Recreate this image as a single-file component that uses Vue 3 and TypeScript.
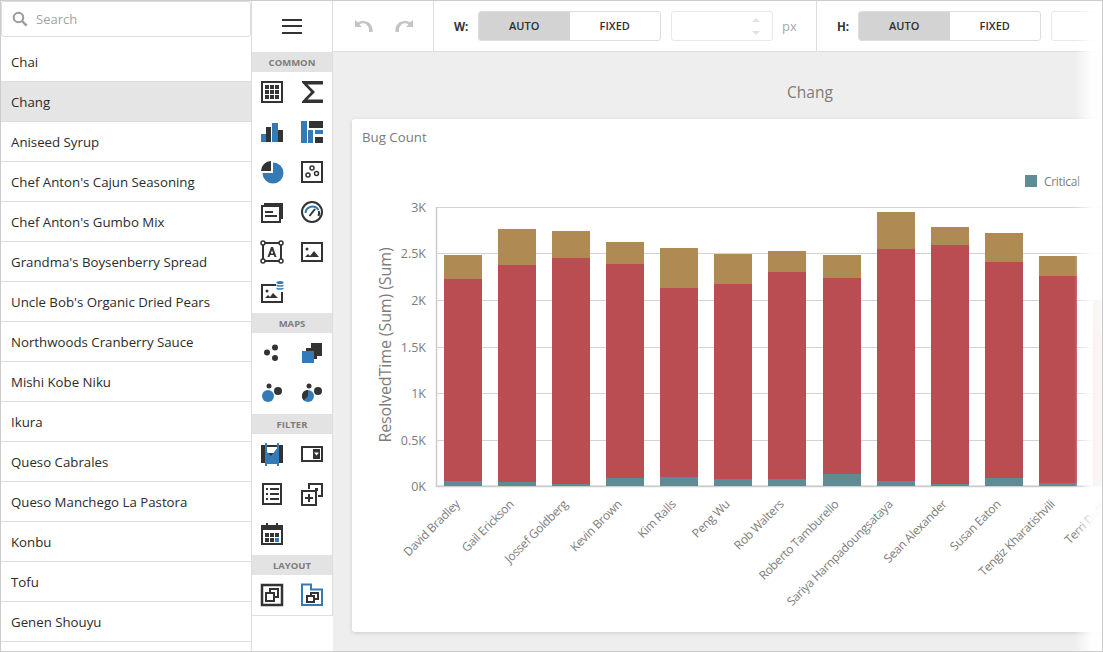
<script setup lang="ts">
const products: string[] = ['Chai','Chang','Aniseed Syrup',"Chef Anton's Cajun Seasoning","Chef Anton's Gumbo Mix","Grandma's Boysenberry Spread","Uncle Bob's Organic Dried Pears",'Northwoods Cranberry Sauce','Mishi Kobe Niku','Ikura','Queso Cabrales','Queso Manchego La Pastora','Konbu','Tofu','Genen Shouyu']
const ticks = [['3K',207.5],['2.5K',253.5],['2K',300.5],['1.5K',347.5],['1K',393.5],['0.5K',440.5],['0K',486]] as [string, number][]
const barData = [
  ['David Bradley',444,481,279,255],['Gail Erickson',498,482,265,229],['Jossef Goldberg',552,484,258,231],
  ['Kevin Brown',606,478,264,242],['Kim Ralls',660,477,288,248],['Peng Wu',714,479,284,254],
  ['Rob Walters',768,479,272,251],['Roberto Tamburello',823,474,278,255],['Sariya Harnpadoungsataya',877,481,249,212],
  ['Sean Alexander',931,484,245,227],['Susan Eaton',985,478,262,233],['Tengiz Kharatishvili',1039,483,276,256],
  ['Terri Duffy',1093,480,330,300]
] as [string, number, number, number, number][]
</script>

<template>
  <div class="frame">
    <aside class="list-panel">
      <div class="search">
        <svg width="16" height="16" viewBox="0 0 16 16"><circle cx="6.5" cy="6.5" r="4.8" fill="none" stroke="#a09a94" stroke-width="2"/><path d="M10 10l4.6 4.6" stroke="#a09a94" stroke-width="2.4"/></svg>
        <span>Search</span>
      </div>
      <ul class="products">
        <li v-for="p in products" :key="p" :class="{ selected: p === 'Chang' }">{{ p }}</li>
      </ul>
    </aside>

    <nav class="toolbox">
      <div class="burger"><i></i><i></i><i></i></div>
      <h4>COMMON</h4>
      <div class="icons">
        <svg viewBox="0 0 24 24"><rect x="2" y="2" width="20" height="20" fill="none" stroke="#333" stroke-width="2"/><path fill="#333" d="M5 5h4v4H5zM10 5h4v4h-4zM15 5h4v4h-4zM5 10h4v4H5zM10 10h4v4h-4zM15 10h4v4h-4zM5 15h4v4H5zM10 15h4v4h-4zM15 15h4v4h-4z"/></svg>
        <svg viewBox="0 0 24 24"><path fill="#333" d="M2 1h21v3.500H7.500L15 12l-7.500 7.500H23V23H2v-1.500L11 12 2 2.500z"/></svg>
        <svg viewBox="0 0 24 24"><path fill="#337ab7" d="M1 14h5v8H1zM12 3h6v19h-6z"/><path fill="#333" d="M6 7h5v15H6zM18 10h5v12h-5z"/></svg>
        <svg viewBox="0 0 24 24"><path fill="#337ab7" d="M1 1h6v22H1zM8 10h5v13H8zM15 10h8v4h-8z"/><path fill="#333" d="M9 1h14v7H9zM15 17h8v6h-8z"/></svg>
        <svg viewBox="0 0 24 24"><path fill="#333" d="M11 1v10H1A10 10 0 0 1 11 1z"/><path fill="#337ab7" d="M13 2.500a10.500 10.500 0 1 1-10.500 10.500h10.500z"/></svg>
        <svg viewBox="0 0 24 24"><rect x="2" y="2" width="20" height="20" fill="none" stroke="#333" stroke-width="2"/><g fill="none" stroke="#333" stroke-width="1.500"><circle cx="12" cy="8" r="2"/><circle cx="8" cy="15" r="2"/><circle cx="16.500" cy="13.500" r="2"/></g></svg>
        <svg viewBox="0 0 24 24"><path fill="#333" d="M4 3h19v16h-2V5H4z"/><rect x="2" y="6" width="18" height="16" fill="#fff" stroke="#333" stroke-width="2"/><path fill="#333" d="M5 11h8v2H5zM5 15h12v2H5z"/></svg>
        <svg viewBox="0 0 24 24"><circle cx="12" cy="12" r="10" fill="none" stroke="#333" stroke-width="2"/><path d="M5.500 13a7 7 0 0 1 13 -3" fill="none" stroke="#337ab7" stroke-width="2"/><path d="M9.500 16L15 9" stroke="#333" stroke-width="2"/><path d="M18.800 11a7 7 0 0 1 -.3 5" fill="none" stroke="#333" stroke-width="2"/></svg>
        <svg viewBox="0 0 24 24"><rect x="3" y="3" width="18" height="18" fill="none" stroke="#333" stroke-width="2"/><g fill="#fff" stroke="#333" stroke-width="1.500"><circle cx="3" cy="3" r="2"/><circle cx="21" cy="3" r="2"/><circle cx="3" cy="21" r="2"/><circle cx="21" cy="21" r="2"/></g><path fill="#333" d="M11 7h2l3.500 10h-2l-.7-2h-3.600l-.7 2h-2zM12 10l-1.200 3.400h2.400z"/></svg>
        <svg viewBox="0 0 24 24"><rect x="2" y="3" width="20" height="18" fill="none" stroke="#333" stroke-width="2"/><circle cx="7" cy="9" r="1.500" fill="#333"/><path fill="#333" d="M5 17l3-3 2 2 4-5 5 6z"/></svg>
        <svg viewBox="0 0 24 24"><path fill="none" stroke="#333" stroke-width="2" d="M16 5H2v17h20v-10"/><circle cx="7" cy="11" r="1.500" fill="#333"/><path fill="#333" d="M5 18l3-3 2 2 3-4 5 5z"/><g fill="#337ab7"><ellipse cx="20" cy="2.500" rx="3.500" ry="1.500"/><path d="M16.500 4.500c1 1 6 1 7 0V6c-1 1-6 1-7 0zM16.500 7.500c1 1 6 1 7 0V9c-1 1-6 1-7 0z"/></g></svg>
      </div>
      <h4>MAPS</h4>
      <div class="icons">
        <svg viewBox="0 0 24 24"><g fill="#333"><circle cx="7" cy="11.500" r="3"/><circle cx="15" cy="6.500" r="3"/><circle cx="15" cy="17" r="3"/></g></svg>
        <svg viewBox="0 0 24 24"><path fill="#333" d="M6 7h5V2h11v13h-5v3H6z"/><path fill="#337ab7" d="M2 10h12v12H2z"/></svg>
        <svg viewBox="0 0 24 24"><circle cx="9" cy="5" r="2.500" fill="#333"/><circle cx="18" cy="10" r="4" fill="#333"/><circle cx="8" cy="15" r="6" fill="#337ab7"/></svg>
        <svg viewBox="0 0 24 24"><circle cx="9" cy="5" r="2.500" fill="#333"/><circle cx="18" cy="10" r="4" fill="#333"/><circle cx="8" cy="15" r="6" fill="#337ab7"/><path fill="#333" d="M8 15V9A6 6 0 0 0 3.800 19.300z"/></svg>
      </div>
      <h4>FILTER</h4>
      <div class="icons">
        <svg viewBox="0 0 24 24"><path fill="#333" d="M1 3h22v18H1z"/><path fill="#fff" d="M6 5h12v6H6z"/><path fill="#337ab7" d="M5 8l6 6 7-9v17H5z"/><path fill="#337ab7" d="M5 1h2v24H5zM17 1h2v24h-2z"/></svg>
        <svg viewBox="0 0 24 24"><rect x="2" y="5" width="20" height="14" fill="none" stroke="#333" stroke-width="2"/><rect x="13" y="7" width="7" height="10" fill="#333"/><path fill="#fff" d="M14 10.500h5l-2.500 3z"/></svg>
        <svg viewBox="0 0 24 24"><rect x="3" y="2" width="18" height="20" fill="none" stroke="#333" stroke-width="2"/><path fill="#333" d="M6 6h2v2H6zM10 6h9v2h-9zM6 11h2v2H6zM10 11h9v2h-9zM6 16h2v2H6zM10 16h9v2h-9z"/></svg>
        <svg viewBox="0 0 24 24"><path fill="none" stroke="#333" stroke-width="2" d="M9 7V2h13v12h-4"/><path fill="#333" d="M15 6h3v3h-3z"/><rect x="2" y="9" width="14" height="14" fill="#fff" stroke="#333" stroke-width="2"/><path fill="#333" d="M8 12h2v3h3v2h-3v3H8v-3H5v-2h3z"/></svg>
        <svg viewBox="0 0 24 24"><rect x="2" y="4" width="20" height="18" fill="none" stroke="#333" stroke-width="2"/><path fill="#333" d="M2 4h20v4H2zM6 1h2v4H6zM16 1h2v4h-2zM5 11h4v4H5zM10 11h4v4h-4zM5 16h4v4H5zM10 16h4v4h-4zM15 11h4v4h-4z"/><path fill="#337ab7" d="M15 16h4v4h-4z"/></svg>
      </div>
      <h4>LAYOUT</h4>
      <div class="icons">
        <svg viewBox="0 0 24 24"><rect x="2" y="2" width="20" height="20" fill="none" stroke="#333" stroke-width="2.500"/><rect x="10" y="6" width="8" height="8" fill="none" stroke="#333" stroke-width="2"/><rect x="6" y="10" width="8" height="8" fill="#fff" stroke="#333" stroke-width="2"/></svg>
        <svg viewBox="0 0 24 24"><path fill="none" stroke="#337ab7" stroke-width="2" d="M2 22V1.500h9v5h11V22z"/><rect x="11" y="10" width="7" height="6" fill="none" stroke="#333" stroke-width="2"/><rect x="7" y="13" width="7" height="6" fill="#fff" stroke="#333" stroke-width="2"/></svg>
      </div>
    </nav>

    <main class="workspace">
      <header class="toolbar">
        <div class="history">
          <svg width="20" height="16" viewBox="0 0 20 16"><path fill="#c4c4c4" d="M1 2v7h7L5.500 6.500C9 4 14 5.500 15 11v3h3.500v-3C18 5 11 .5 4 4.500z"/></svg>
          <svg width="20" height="16" viewBox="0 0 20 16"><path fill="#c4c4c4" d="M19 2v7h-7l2.500-2.500C11 4 6 5.500 5 11v3H1.500v-3C2 5 9 .5 16 4.500z"/></svg>
        </div>
        <div class="size">
          <b>W:</b>
          <div class="toggle"><span class="on">AUTO</span><span>FIXED</span></div>
          <div class="num"><em></em><em class="down"></em></div>
          <small>px</small>
        </div>
        <div class="size second">
          <b>H:</b>
          <div class="toggle"><span class="on">AUTO</span><span>FIXED</span></div>
          <div class="num"></div>
        </div>
      </header>
      <div class="canvas">
        <div class="sheet">
          <div class="title">Chang</div>
          <section class="card">
            <div class="card-title">Bug Count</div>
          </section>
        </div>
      </div>
      <svg class="chart" width="769" height="599" viewBox="333 52 769 599">
        <g stroke="#d3d3d3" stroke-width="1">
          <path v-for="t in ticks" :key="t[0]" :d="`M436 ${t[1]}H1103`" />
        </g>
        <path d="M436.500 207V486.500H1103" fill="none" stroke="#ccc" stroke-width="1.500"/>
        <g v-for="b in barData" :key="b[0]">
          <rect :x="b[1]" :y="b[4]" width="38" :height="b[3]-b[4]" fill="#af8a53"/>
          <rect :x="b[1]" :y="b[3]" width="38" :height="b[2]-b[3]" fill="#ba4d51"/>
          <rect :x="b[1]" :y="b[2]" width="38" :height="486-b[2]" fill="#5f8b95"/>
          <text :x="b[1]+16.5" y="505" :transform="`rotate(-45 ${b[1]+16.5} 505)`" text-anchor="end" class="cat">{{ b[0] }}</text>
        </g>
        <text v-for="t in ticks" :key="'l'+t[0]" x="426" :y="t[1]+4.5" text-anchor="end" class="val">{{ t[0] }}</text>
        <text x="391" y="345" transform="rotate(-90 391 345)" text-anchor="middle" class="axis">ResolvedTime (Sum) (Sum)</text>
        <rect x="1025" y="175" width="12" height="12" fill="#5f8b95"/>
        <text x="1044" y="186" class="cat">Critical</text>
      </svg>
      <div class="fade"></div>
    </main>
  </div>
</template>

<style>
html, body { margin: 0; }
</style>

<style scoped>
.frame {
  box-sizing: border-box;
  width: 1103px;
  height: 652px;
  display: flex;
  border: 1px solid #ccc;
  overflow: hidden;
  background: #fff;
  font-family: "Open Sans", "Noto Sans", sans-serif;
  color: #2b2b2b;
}
.list-panel {
  box-sizing: border-box;
  width: 251px;
  flex: none;
  border-right: 1px solid #ddd;
  display: flex;
  flex-direction: column;
  font-size: 13.250px;
}
.search {
  box-sizing: border-box;
  height: 36px;
  border: 1px solid #ddd;
  border-radius: 3px;
  display: flex;
  align-items: center;
  gap: 8px;
  padding-left: 10px;
  color: #a3a3a3;
  font-size: 13px;
}
.products { list-style: none; margin: 5px 0 0; padding: 0; }
.products li {
  box-sizing: border-box;
  height: 40px;
  line-height: 40px;
  padding-left: 10px;
  border-bottom: 1px solid #ddd;
}
.products li.selected { background: #e5e5e5; }
.toolbox {
  width: 81px;
  flex: none;
  border-right: 1px solid #ddd;
  box-sizing: border-box;
  display: flex;
  flex-direction: column;
  height: 615px;
  border-bottom: 1px solid #ddd;
}
.burger {
  box-sizing: border-box;
  height: 51px;
  padding-bottom: 1px;
  flex: none;
  display: flex;
  flex-direction: column;
  align-items: center;
  justify-content: center;
  gap: 4.500px;
}
.burger i { display: block; width: 20px; height: 2px; background: #333; }
.toolbox h4 {
  margin: 0;
  height: 20px;
  flex: none;
  line-height: 21px;
  background: #e3e3e3;
  text-align: center;
  font-size: 9.500px;
  font-weight: 700;
  color: #7d7d7d;
}
.icons {
  display: grid;
  grid-template-columns: 40px 40px;
  grid-auto-rows: 40px;
  padding-bottom: 1px;
}
.icons svg { width: 24px; height: 24px; place-self: center; }
.workspace {
  flex: 1;
  min-width: 0;
  position: relative;
  display: flex;
  flex-direction: column;
  background: #eee;
}
.toolbar {
  flex: none;
  height: 51px;
  box-sizing: border-box;
  background: #fff;
  border-bottom: 1px solid #ddd;
  display: flex;
  align-items: center;
  white-space: nowrap;
}
.history {
  width: 101px;
  flex: none;
  height: 100%;
  box-sizing: border-box;
  padding-left: 1px;
  border-right: 1px solid #ddd;
  display: flex;
  align-items: center;
  justify-content: center;
  gap: 20px;
}
.size {
  display: flex;
  align-items: center;
  height: 100%;
  box-sizing: border-box;
  padding-left: 20px;
  width: 383px;
  flex: none;
  border-right: 1px solid #ddd;
}
.size.second { border-right: 0; }
.size b { width: 24px; flex: none; font-size: 11.500px; font-weight: 700; color: #333; }
.size.second b { width: 21px; }
.toggle {
  display: flex;
  flex: none;
  box-sizing: border-box;
  width: 183px;
  height: 30px;
  border: 1px solid #ddd;
  border-radius: 3px;
  overflow: hidden;
  font-size: 11px;
  font-weight: 600;
  color: #2f2f2f;
}
.toggle span { flex: 1; text-align: center; line-height: 28px; }
.toggle .on { background: #d3d3d3; }
.num {
  position: relative;
  box-sizing: border-box;
  width: 102px;
  height: 30px;
  margin-left: 10px;
  border: 1px solid #e8e8e8;
  border-radius: 3px;
  flex: none;
}
.num em {
  position: absolute;
  right: 12px;
  top: 6px;
  border: 4px solid transparent;
  border-bottom: 4px solid #e2e2e2;
  border-top: 0;
}
.num em.down { top: 19px; border-bottom: 0; border-top: 4px solid #e2e2e2; }
.size small { margin-left: 9px; font-size: 13px; color: #a8a8a8; }
.canvas {
  flex: 1;
  min-height: 0;
  overflow: hidden;
  padding: 0 0 19px 19px;
}
.sheet {
  width: 916px;
  height: 100%;
  display: flex;
  flex-direction: column;
}
.title {
  height: 67px;
  line-height: 81px;
  flex: none;
  text-align: center;
  font-size: 15.500px;
  color: #7b7b7b;
}
.card {
  flex: 1;
  background: #fff;
  border-radius: 3px;
  box-shadow: 0 1px 4px rgba(0, 0, 0, .14);
}
.card-title { font-size: 13.250px; color: #7a7a7a; padding: 9px 0 0 10px; }
.chart { position: absolute; left: 0; top: 51px; pointer-events: none; }
.cat { font-size: 12px; fill: #7c7c7c; font-family: "Open Sans", sans-serif; letter-spacing: -0.3px; }
.val { font-size: 12.500px; fill: #7c7c7c; font-family: "Open Sans", sans-serif; }
.axis { font-size: 16px; fill: #7c7c7c; font-family: "Open Sans", sans-serif; letter-spacing: -0.1px; }
.fade {
  position: absolute;
  top: 0;
  right: 0;
  bottom: 0;
  width: 28px;
  background: linear-gradient(to right, rgba(255, 255, 255, 0), rgba(255, 255, 255, .92) 62%, rgba(255, 255, 255, .95));
}
</style>
